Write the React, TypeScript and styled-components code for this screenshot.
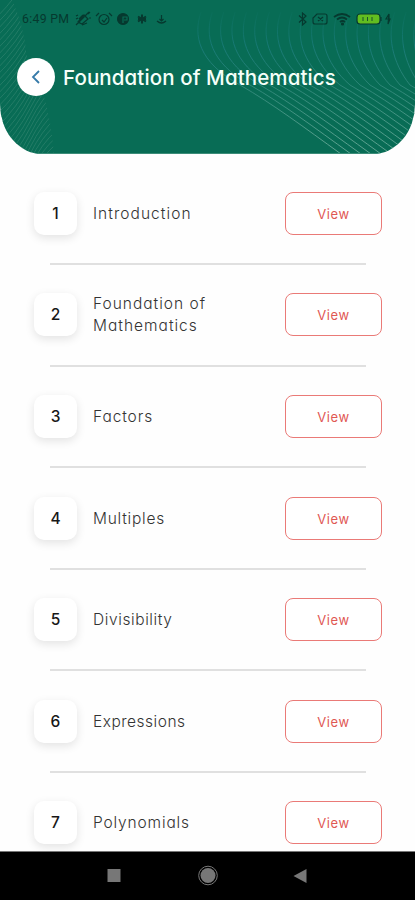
import React from 'react';
import styled, { createGlobalStyle } from 'styled-components';

const Global = createGlobalStyle`
  *{box-sizing:border-box}
  body{margin:0;background:#fefefe;font-family:Inter,sans-serif;font-feature-settings:"cv11";}
`;
const Screen = styled.div`width:415px;height:900px;display:flex;flex-direction:column;overflow:hidden;background:#fefefe;`;
const Header = styled.header`height:154px;flex:none;position:relative;overflow:hidden;background:#086c55;border-radius:0 0 42px 42px / 0 0 50px 50px;`;
const Pattern = styled.svg`position:absolute;inset:0;`;
const StatusBar = styled.div`position:relative;display:flex;justify-content:space-between;height:38px;padding:0 19px 0 22px;color:#06392f;`;
const Clock = styled.span`font:400 12.3px/38px Roboto,sans-serif;width:51px;white-space:nowrap;letter-spacing:.3px;`;
const Group = styled.div`display:flex;align-items:center;`;
const TitleBar = styled.div`position:relative;display:flex;align-items:center;height:78px;padding-left:17px;gap:8px;`;
const Back = styled.button`width:38px;height:38px;border:0;border-radius:50%;background:#fff;padding:0;display:grid;place-items:center;`;
const Title = styled.h1`margin:2px 0 0;color:#f5fff9;font-size:20.5px;font-weight:550;letter-spacing:.1px;line-height:28px;white-space:nowrap;`;
const List = styled.main`flex:1;min-height:0;overflow:hidden;padding-top:9.5px;`;
const Row = styled.section`height:101.6px;display:flex;flex-direction:column;`;
const RowBody = styled.div`flex:1;display:flex;align-items:center;padding:0 33px 0 34px;`;
const Divider = styled.div`height:2px;margin:0 49px 0 50px;background:#e0e0e0;`;
const Badge = styled.div`width:43px;height:43px;border-radius:10px;background:#fff;box-shadow:0 3px 10px rgba(0,0,0,.11);display:grid;place-items:center;font-size:15.5px;font-weight:500;color:#171717;`;
const Label = styled.div<{ $spacing: number }>`flex:1;margin:1px 0 0 16px;font-size:15.5px;line-height:22px;font-weight:300;white-space:pre-line;color:#333;letter-spacing:${p => p.$spacing}px;`;
const View = styled.button`width:97px;height:43px;border:1px solid #ea7a77;border-radius:8px;background:#fff;color:#df5854;font:400 13px Inter,sans-serif;letter-spacing:.6px;padding:1px 0 0;`;
const Nav = styled.nav`height:49px;flex:none;background:#000;border-top:1px solid #777;display:flex;`;

const topics = [
  { name: 'Introduction', spacing: 1.05 },
  { name: 'Foundation of\nMathematics', spacing: 1 },
  { name: 'Factors', spacing: .9 },
  { name: 'Multiples', spacing: .75 },
  { name: 'Divisibility', spacing: .6 },
  { name: 'Expressions', spacing: .5 },
  { name: 'Polynomials', spacing: .85 },
];

const Waves = () => (
  <Pattern width="415" height="154" viewBox="0 0 415 154" fill="none">
    <defs>
      <linearGradient id="fade" gradientUnits="userSpaceOnUse" x1="0" y1="0" x2="0" y2="154">
        <stop offset=".05" stopColor="#147a72" stopOpacity="0" />
        <stop offset=".3" stopColor="#177975" />
        <stop offset=".55" stopColor="#2b8576" />
        <stop offset="1" stopColor="#61a592" />
      </linearGradient>
      <clipPath id="leftShape"><path d="M0 0H12Q24 25 27 58Q49 92 54 154H0z" /></clipPath>
    </defs>
    {Array.from({ length: 22 }, (_, i) => {
      const top = i * 11.4;
      const low = i * 10;
      return <path key={i} stroke="url(#fade)" strokeWidth="1"
        d={`M${201 + top} 12C${193 + top} 35 ${198 + top} 62 ${240 + low} 85C${273 + low} 104 ${305 + low} 128 ${341 + low} 154`} />;
    })}
    <g clipPath="url(#leftShape)">
      {Array.from({ length: 36 }, (_, i) => (
        <path key={i} stroke="#2b806b" strokeWidth=".8"
          d={`M-4 ${18 + i * 6.5}Q18 ${-4 + i * 6.5} 30 ${-28 + i * 6.5}T56 ${-64 + i * 6.5}`} />
      ))}
    </g>
    <path d="M0 153.5H415" stroke="#3c8c78" />
  </Pattern>
);

const StatusLeft = () => (
  <svg width="98" height="16" viewBox="0 0 98 16" fill="none" stroke="currentColor" strokeWidth="1.2">
    <path d="M5 11 11 4l4 4-6 5zM6 8l4-4M3 8l2-1M3 14 16 1M9 14l5-2M15 3l2-2M16 7h2M3 5l2-1" />
    <circle cx="31" cy="8.5" r="5" /><path d="m26 2-3 3m13-3 3 3m-10 4 2 2 3-4" />
    <circle cx="50" cy="8" r="5.5" fill="currentColor" /><path d="M50 12V6h4v3h-3" stroke="#086c55" />
    <path d="M69 3.5v9M65 5.5l8 5M73 5.5l-8 5M65 8h8" strokeWidth="2" />
    <path d="M88.5 4v6m-2-2 2 2 2-2M84 10q4.5 4 9 0" />
  </svg>
);
const StatusRight = () => (
  <svg width="98" height="18" viewBox="0 0 98 18" fill="none" stroke="currentColor" strokeWidth="1.2">
    <path d="m1 5.5 7 6.500-3.500 3V3L8 6l-7 6.500" />
    <path d="M19 4h8q2 0 2 2v6q0 2-2 2H17q-2 0-2-2V8zM20 7l5 4m0-4-5 4" />
    <path d="M36 7q8-6 16 0M39 9.500q5-4 10 0M42 12q2.500-2 5 0" strokeWidth="1.8" /><circle cx="44.500" cy="14" r="1" fill="currentColor" />
    <rect x="59" y="4" width="23" height="10" rx="3" fill="#62bd20" /><path d="M65 7v4m4.500-4v4m4.500-4v4" strokeWidth=".8" /><path d="M83 7v4" />
    <path d="m91 4-3 5h4l-2 5zm0 0v5" />
  </svg>
);

export default function App() {
  return <><Global /><Screen>
    <Header><Waves />
      <StatusBar><Group><Clock>6:49 PM</Clock><StatusLeft /></Group><Group><StatusRight /></Group></StatusBar>
      <TitleBar><Back aria-label="Back"><svg width="38" height="38" fill="none"><path d="m22 13-6 6 6 6" stroke="#367aa9" strokeWidth="1.8" /></svg></Back><Title>Foundation of Mathematics</Title></TitleBar>
    </Header>
    <List>{topics.map((t, i) => <Row key={t.name}><RowBody><Badge>{i + 1}</Badge><Label $spacing={t.spacing}>{t.name}</Label><View>View</View></RowBody><Divider /></Row>)}</List>
    <Nav><svg width="415" height="48" viewBox="0 0 415 48" fill="#777"><path d="M107.500 17h13v13h-13zM306.500 17v14l-13-7z" /><circle cx="208" cy="23.500" r="7.500" /><circle cx="208" cy="23.500" r="9.300" fill="none" stroke="#777" /></svg></Nav>
  </Screen></>;
}
